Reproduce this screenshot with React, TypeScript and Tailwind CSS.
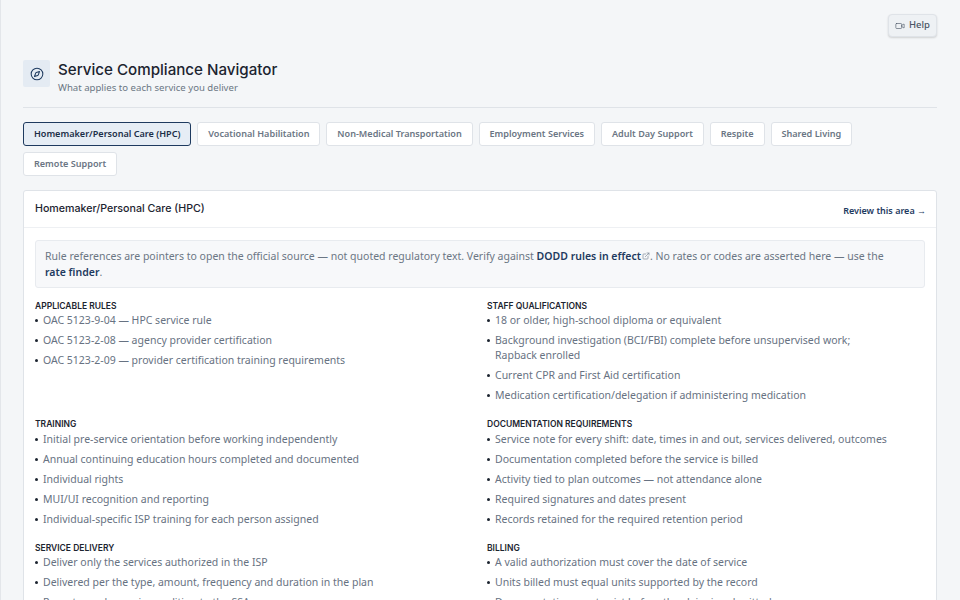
import { Compass, ExternalLink, Video } from "lucide-react";

const services = [
  "Homemaker/Personal Care (HPC)",
  "Vocational Habilitation",
  "Non-Medical Transportation",
  "Employment Services",
  "Adult Day Support",
  "Respite",
  "Shared Living",
  "Remote Support",
];

const sections = [
  {
    title: "APPLICABLE RULES",
    items: [
      "OAC 5123-9-04 — HPC service rule",
      "OAC 5123-2-08 — agency provider certification",
      "OAC 5123-2-09 — provider certification training requirements",
    ],
  },
  {
    title: "STAFF QUALIFICATIONS",
    items: [
      "18 or older, high-school diploma or equivalent",
      "Background investigation (BCI/FBI) complete before unsupervised work; Rapback enrolled",
      "Current CPR and First Aid certification",
      "Medication certification/delegation if administering medication",
    ],
  },
  {
    title: "TRAINING",
    items: [
      "Initial pre-service orientation before working independently",
      "Annual continuing education hours completed and documented",
      "Individual rights",
      "MUI/UI recognition and reporting",
      "Individual-specific ISP training for each person assigned",
    ],
  },
  {
    title: "DOCUMENTATION REQUIREMENTS",
    items: [
      "Service note for every shift: date, times in and out, services delivered, outcomes",
      "Documentation completed before the service is billed",
      "Activity tied to plan outcomes — not attendance alone",
      "Required signatures and dates present",
      "Records retained for the required retention period",
    ],
  },
  {
    title: "SERVICE DELIVERY",
    items: [
      "Deliver only the services authorized in the ISP",
      "Delivered per the type, amount, frequency and duration in the plan",
      "Report any change in condition to the SSA",
    ],
  },
  {
    title: "BILLING",
    items: [
      "A valid authorization must cover the date of service",
      "Units billed must equal units supported by the record",
      "Documentation must exist before the claim is submitted",
    ],
  },
];

export default function App() {
  return (
    <div className="h-[600px] overflow-hidden border-l border-[#e3e6ea] bg-[#f4f6f8] pl-[22px] pr-[23px] pt-[14px] font-['Noto_Sans',sans-serif] text-[#677282]">
      <div className="flex justify-end">
        <button
          type="button"
          className="flex h-[23px] items-center gap-[4px] rounded-[4px] border border-[#dfe3e8] bg-[#eef1f4] px-[6px] text-[9.5px] font-medium text-[#4a5565] shadow-[0_1px_2px_rgba(0,0,0,0.15)]"
        >
          <Video size={10} strokeWidth={1.5} />
          Help
        </button>
      </div>

      <div className="mt-[23px] flex items-start gap-[8px] border-b border-[#dfe3e8] pb-[12px]">
        <div className="flex size-[27px] items-center justify-center rounded-[2px] bg-[#e4ebf3] text-[#1e3a5f]">
          <Compass size={14} strokeWidth={1.75} />
        </div>
        <div>
          <h1 className="font-['Inter',sans-serif] text-[15.15px] leading-[20px] font-medium text-[#1c2430]">
            Service Compliance Navigator
          </h1>
          <p className="mt-[1px] text-[9.6px] leading-[14px] text-[#6b7684]">
            What applies to each service you deliver
          </p>
        </div>
      </div>

      <div className="mt-[14px] flex flex-wrap gap-x-[6px] gap-y-[6px]">
        {services.map((s, i) => (
          <button
            key={s}
            type="button"
            className={
              i === 0
                ? "h-[24px] rounded-[3px] border border-[#1e3a5f] bg-[#e6edf5] px-[9.9px] text-[9.1px] font-semibold text-[#1c2f48]"
                : "h-[24px] rounded-[3px] border border-[#dfe3e8] bg-white px-[9.9px] text-[9.1px] font-semibold text-[#6b7684]"
            }
          >
            {s}
          </button>
        ))}
      </div>

      <div className="mt-[14px] rounded-[3px] border border-[#dfe3e8] bg-white">
        <div className="flex h-[37px] items-center justify-between border-b border-[#eef0f3] pl-[11px] pr-[10px]">
          <h2 className="font-['Inter',sans-serif] text-[10.65px] font-medium text-[#1c2430]">
            Homemaker/Personal Care (HPC)
          </h2>
          <a className="pt-[3px] text-[9px] font-semibold text-[#1e3a5f]">
            Review this area →
          </a>
        </div>

        <div className="px-[11px] pt-[12px]">
          <div className="rounded-[3px] border border-[#e8ebef] bg-[#f7f8fa] px-[9px] py-[7px] text-[10.5px] leading-[16px] text-[#6b7684]">
            Rule references are pointers to open the official source — not quoted regulatory text. Verify against{" "}
            <strong className="font-semibold text-[#1e3a5f]">
              DODD rules in effect
              <ExternalLink size={8} className="ml-[1px] inline align-baseline text-[#7a8594]" />
            </strong>
            . No rates or codes are asserted here — use the{" "}
            <strong className="font-semibold whitespace-nowrap text-[#1e3a5f]">rate finder</strong>.
          </div>

          <div className="mt-[12.6px] grid grid-cols-2 gap-x-[14px] gap-y-[10.8px]">
            {sections.map((sec) => (
              <section key={sec.title} className="pr-[32px]">
                <h3 className="font-['Inter',sans-serif] text-[8.5px] leading-[11px] font-semibold text-[#1c2430]">
                  {sec.title}
                </h3>
                <ul className="mt-[1.4px]">
                  {sec.items.map((item) => (
                    <li key={item} className="mb-[5.1px] flex gap-[5px] text-[10.5px] leading-[15px]">
                      <span className="mt-[6px] size-[3px] shrink-0 rounded-full bg-[#1c2430]" />
                      <span>{item}</span>
                    </li>
                  ))}
                </ul>
              </section>
            ))}
          </div>
        </div>
      </div>
    </div>
  );
}
